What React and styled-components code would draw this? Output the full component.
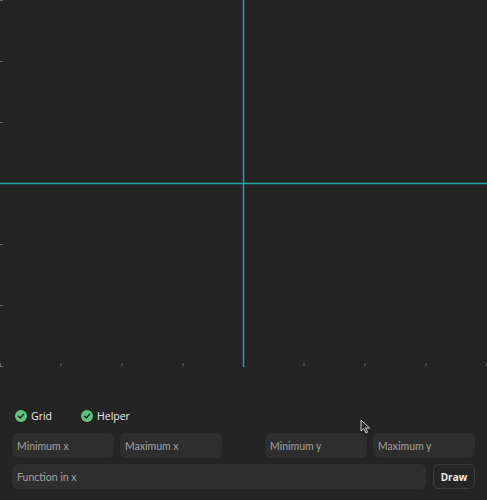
import React from "react";
import styled, { createGlobalStyle } from "styled-components";

const GlobalStyle = createGlobalStyle`
  html, body {
    margin: 0;
    padding: 0;
    background: #242424;
  }
  body {
    font-family: "Open Sans", "Noto Sans", sans-serif;
    color: #e6e6e6;
  }
`;

const Window = styled.div`
  position: relative;
  width: 487px;
  height: 500px;
  background: #242424;
  display: flex;
  flex-direction: column;
  overflow: hidden;
`;

const Plot = styled.svg`
  display: block;
  width: 487px;
  height: 367px;
  flex: none;
`;

const Controls = styled.div`
  display: flex;
  flex-direction: column;
  padding: 41px 12px 0 12px;
`;

const Toggles = styled.div`
  display: flex;
  gap: 29px;
  padding-left: 3px;
  height: 16px;
  align-items: center;
`;

const Toggle = styled.label`
  display: flex;
  align-items: center;
  gap: 4px;
  font-size: 10.5px;
  color: #ececec;
`;

const Check = styled.span`
  width: 12px;
  height: 12px;
  border-radius: 50%;
  background: #5fc27f;
  display: flex;
  align-items: center;
  justify-content: center;
`;

const RangeRow = styled.div`
  display: flex;
  justify-content: space-between;
  margin-top: 9px;
`;

const Pair = styled.div`
  display: flex;
  gap: 6px;
`;

const Field = styled.input`
  box-sizing: border-box;
  width: ${(p) => (p.$grow ? "auto" : "102px")};
  flex: ${(p) => (p.$grow ? 1 : "none")};
  height: 25px;
  border: none;
  border-radius: 6px;
  background: #2e2e2e;
  color: #e6e6e6;
  font-family: "Lato", "Open Sans", sans-serif;
  font-size: 10.5px;
  padding: 0 5px;
  outline: none;
  &::placeholder {
    color: #a2a2a2;
  }
`;

const FunctionRow = styled.div`
  display: flex;
  gap: 7px;
  margin-top: 6px;
`;

const DrawButton = styled.button`
  box-sizing: border-box;
  width: 42px;
  height: 25px;
  border: 1px solid #3c3c3c;
  border-radius: 6px;
  background: #262626;
  color: #ececec;
  font-family: "Open Sans", "Noto Sans", sans-serif;
  font-size: 10px;
  font-weight: 700;
  padding: 0;
`;

const Cursor = styled.svg`
  position: absolute;
  left: 360px;
  top: 419px;
`;

const W = 487;
const H = 367;
const AX = 243;
const AY = 183;

const CheckMark = () => (
  <svg width="8" height="8" viewBox="0 0 8 8">
    <path d="M1.5 4.2 L3.3 6 L6.6 2.2" stroke="#1e1e1e" strokeWidth="1.3" fill="none" strokeLinecap="round" strokeLinejoin="round" />
  </svg>
);

const App = () => {
  const yTicks = [0, 61, 122, 183, 244, 305, 366];
  const xTicks = [0.5, 61, 122, 183, 304, 365, 426, 486.5];

  return (
    <Window>
      <GlobalStyle />
      <Plot viewBox={`0 0 ${W} ${H}`}>
        {yTicks.map((y) => (
          <line key={"y" + y} x1="0" x2="3" y1={y + 0.5} y2={y + 0.5} stroke="#6a6a6a" strokeWidth="1" />
        ))}
        {xTicks.map((x) => (
          <line key={"x" + x} x1={x} x2={x} y1={H - 4} y2={H - 1} stroke="#6a6a6a" strokeWidth="1" />
        ))}
        <line x1="0" x2={W} y1={AY + 0.5} y2={AY + 0.5} stroke="#1fa6a6" strokeWidth="1.4" />
        <line x1={AX + 0.5} x2={AX + 0.5} y1="0" y2={H} stroke="#1fa6a6" strokeWidth="1.4" />
      </Plot>
      <Controls>
        <Toggles>
          <Toggle>
            <Check>
              <CheckMark />
            </Check>
            Grid
          </Toggle>
          <Toggle>
            <Check>
              <CheckMark />
            </Check>
            Helper
          </Toggle>
        </Toggles>
        <RangeRow>
          <Pair>
            <Field placeholder="Minimum x" />
            <Field placeholder="Maximum x" />
          </Pair>
          <Pair>
            <Field placeholder="Minimum y" />
            <Field placeholder="Maximum y" />
          </Pair>
        </RangeRow>
        <FunctionRow>
          <Field $grow placeholder="Function in x" />
          <DrawButton>Draw</DrawButton>
        </FunctionRow>
      </Controls>
      <Cursor width="12" height="16" viewBox="0 0 12 16">
        <path d="M1 1 L1 12 L3.8 9.6 L6 14 L7.6 13.2 L5.5 9 L9.5 9 Z" fill="#2a2a2a" stroke="#d0d0d0" strokeWidth="1" strokeLinejoin="round" />
      </Cursor>
    </Window>
  );
};

export default App;
